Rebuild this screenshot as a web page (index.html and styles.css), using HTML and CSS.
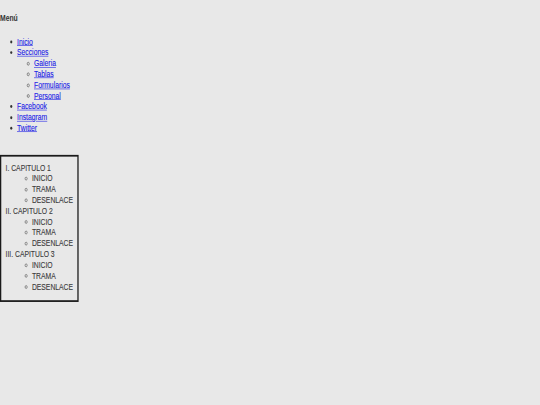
FILE: index.html
```html
<!DOCTYPE html>
<html lang="es">
<head>
<meta charset="utf-8">
<title>Menú</title>
<link rel="stylesheet" href="styles.css">
</head>
<body>
<div class="frame">
<div class="page">
  <nav class="menu">
    <h4 class="menu-title">Menú</h4>
    <ul class="menu-list">
      <li><a href="#">Inicio</a></li>
      <li><a href="#">Secciones</a>
        <ul class="sub-list">
          <li><a href="#">Galeria</a></li>
          <li><a href="#">Tablas</a></li>
          <li><a href="#">Formularios</a></li>
          <li><a href="#">Personal</a></li>
        </ul>
      </li>
      <li><a href="#">Facebook</a></li>
      <li><a href="#">Instagram</a></li>
      <li><a href="#">Twitter</a></li>
    </ul>
  </nav>
  <div class="chapters">
    <ol class="chapter-list">
      <li>CAPITULO 1
        <ul class="part-list">
          <li>INICIO</li>
          <li>TRAMA</li>
          <li>DESENLACE</li>
        </ul>
      </li>
      <li>CAPITULO 2
        <ul class="part-list">
          <li>INICIO</li>
          <li>TRAMA</li>
          <li>DESENLACE</li>
        </ul>
      </li>
      <li>CAPITULO 3
        <ul class="part-list">
          <li>INICIO</li>
          <li>TRAMA</li>
          <li>DESENLACE</li>
        </ul>
      </li>
    </ol>
  </div>
</div>
</div>
</body>
</html>
```
FILE: styles.css
```css
html {
  background: #e8e8e8;
}
body {
  margin: 0;
  padding: 0;
  font-family: "Liberation Sans", Arial, sans-serif;
  font-size: 16px;
  line-height: 18.4px;
  color: #333;
}
.frame {
  width: 540px;
  height: 405px;
  overflow: hidden;
}
.page {
  width: 1270px;
  padding-top: 1px;
  margin-top: -1px;
  transform: scale(0.425, 0.586);
  transform-origin: 0 0;
}
.menu-title {
  margin: 22px 0 22.6px 0;
  font-size: 16px;
  line-height: 18.4px;
  font-weight: bold;
  color: #333;
}
.menu-list {
  margin: 0;
  padding-left: 40px;
  list-style: disc;
}
.sub-list {
  margin: 0;
  padding-left: 40px;
  list-style: circle;
}
.menu a {
  color: #1a1ae6;
  -webkit-text-stroke: 0.2px #1a1ae6;
}
.chapters {
  display: inline-block;
  margin-top: 36.4px;
  border: 3px solid #1a1a1a;
  padding: 10px 10px 13.7px 10px;
}
.chapter-list {
  margin: 0;
  padding: 0;
  list-style: upper-roman inside;
  color: #3a3a3a;
  -webkit-text-stroke: 0.2px #3a3a3a;
}
.part-list {
  margin: 0;
  padding-left: 62px;
  list-style: circle;
}
```
